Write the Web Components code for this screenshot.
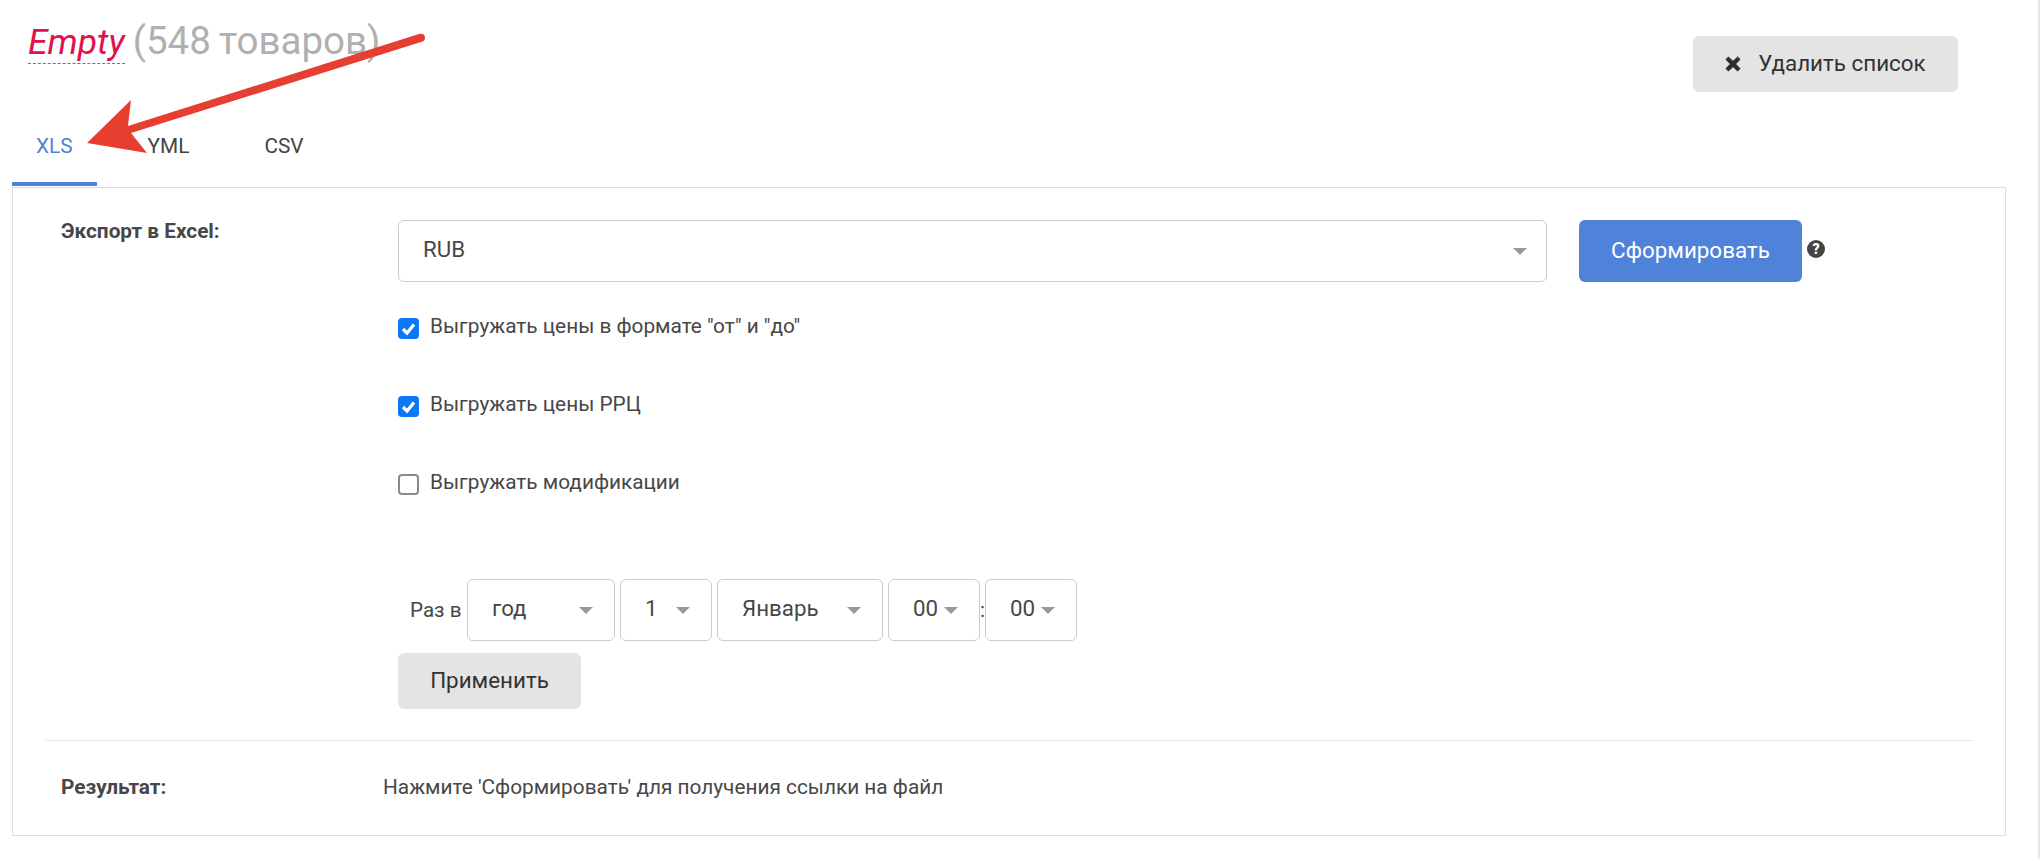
<!DOCTYPE html>
<html lang="ru"><head><meta charset="utf-8"><title>Экспорт</title>
<style>
html,body{margin:0;background:#fff;height:859px;overflow:hidden}
body{font:20px/1.4 Roboto,"Liberation Sans",sans-serif;color:#474747}
</style></head><body>
<export-page>
  <page-header slot="header" count="(548 товаров)" name="Empty"></page-header>
  <tab-bar slot="tabs">
    <tab-item active>XLS</tab-item><tab-item>YML</tab-item><tab-item>CSV</tab-item>
  </tab-bar>
  <export-panel slot="panel"></export-panel>
  <arrow-mark slot="overlay"></arrow-mark>
</export-page>
<script>
const def=(name,html)=>customElements.define(name,class extends HTMLElement{
  connectedCallback(){ if(this.shadowRoot) return; const s=this.attachShadow({mode:'open'}); s.innerHTML=typeof html==='function'?html(this):html; }
});
def('export-page',`<style>:host{display:block;position:relative;width:2040px;height:859px;overflow:hidden}
.edge{position:absolute;top:0;bottom:0;right:0;width:2px;background:#e8e8e8}</style>
<slot name="header"></slot><slot name="tabs"></slot><slot name="panel"></slot><slot name="overlay"></slot><div class="edge"></div>`);
def('page-header',h=>`<style>:host{display:flex;justify-content:space-between;align-items:flex-start;height:120px;padding:0 82px 0 28px;box-sizing:border-box}
.t{font-size:38.5px;line-height:42px;padding-top:20px;color:#b0b0b0;white-space:nowrap;word-spacing:-1.5px}
.n{font-size:35.5px;font-style:italic;color:#e0114d;border-bottom:1px dashed #1d8fd0;display:inline-block;line-height:42px}
app-button{margin-top:36px}</style>
<div class="t"><span class="n">${h.getAttribute('name')}</span> ${h.getAttribute('count')}</div>
<app-button w="265" icon>Удалить список</app-button>`);
def('tab-bar',`<style>:host{display:flex;height:67px;box-sizing:border-box;padding-left:12px}</style><slot></slot>`);
def('tab-item',h=>`<style>:host{display:block;box-sizing:border-box;height:66px;padding:14px 24px 0;margin-right:27px;font-size:20.8px;line-height:24px;color:${h.hasAttribute('active')?'#4f83d9':'#444'};${h.hasAttribute('active')?'border-bottom:4px solid #4f83d9;':''}}</style><slot></slot>`);
def('app-button',h=>{const c=h.getAttribute('kind')==='primary';return `<style>:host{display:inline-flex;align-items:center;justify-content:center;box-sizing:border-box;width:${h.getAttribute('w')}px;height:${h.getAttribute('hh')||56}px;border-radius:6px;background:${c?'#4f83d9':'#e4e4e4'};color:${c?'#fff':'#333'};font-size:22.4px;white-space:nowrap;flex:none}
svg{width:16px;height:16px;margin-right:17px}</style>
${h.hasAttribute('icon')?'<svg viewBox="0 0 16 16"><path d="M3.4 1 8 5.4 12.6 1 15 3.4 10.6 8 15 12.6 12.6 15 8 10.6 3.4 15 1 12.6 5.4 8 1 3.4Z" fill="#2b2b2b" stroke="#2b2b2b" stroke-linejoin="round"/></svg>':''}<slot></slot>`});
def('select-box',h=>`<style>:host{display:flex;align-items:center;box-sizing:border-box;width:${h.getAttribute('w')}px;height:62px;flex:none;border:1px solid #ccc;border-radius:6px;background:#fff;padding-left:${h.getAttribute('pl')||24}px;padding-right:${h.getAttribute('pr')||21}px;font-size:22.3px;color:#474747}
span{flex:1;margin-top:-2px}i{width:0;height:0;border:7px solid transparent;border-top:7px solid #999;border-bottom:0;display:block}</style><span><slot></slot></span><i></i>`);
def('check-row',h=>`<style>:host{display:flex;align-items:center;height:21px;gap:11px;font-size:20.8px;color:#474747;white-space:nowrap}
.b{width:21px;height:21px;box-sizing:border-box;border-radius:4px;flex:none;${h.hasAttribute('checked')?'background:#0b78f5':'border:2px solid #8a8a8a;background:#fff'}}svg{display:block}
.t{margin-top:-3px}</style>
<div class="b">${h.hasAttribute('checked')?'<svg viewBox="0 0 21 21" width="21" height="21"><path d="M5 11 9 15 16 6.5" fill="none" stroke="#fff" stroke-width="3.2"/></svg>':''}</div><span class="t"><slot></slot></span>`);
def('export-panel',`<style>:host{display:block;box-sizing:border-box;margin-left:12px;width:1994px;height:649px;border:1px solid #ddd;padding-top:32px}
.form{display:grid;grid-template-columns:337px 1fr;padding-left:48px}
.label{font-weight:700;font-size:20.8px;line-height:24px;margin-top:-1px}
.main{display:flex;align-items:flex-start}
.help{margin-left:5px;margin-top:20px;width:18px;height:18px;flex:none;display:block}
.checks{display:flex;flex-direction:column;gap:57px;margin-top:36px}
.sched{display:flex;align-items:center;margin-top:84px;gap:5px;font-size:20.6px}
.sched .pre{padding-left:12px;width:69px;box-sizing:border-box;margin-right:-5px;white-space:nowrap}
.sched .col{width:5px;margin:0 -5px 0 -5px;text-align:center}
.apply{margin-top:12px}
hr{border:0;border-top:1px solid #e6e6e6;margin:31px 32px 0 32px}
.res{display:grid;grid-template-columns:322px 1fr;padding:33px 0 0 48px;font-size:20.8px;line-height:26px}
b{font-weight:700}</style>
<div class="form"><div class="label">Экспорт в Excel:</div><div>
<div class="main"><select-box w="1149" pr="19">RUB</select-box><app-button kind="primary" w="223" hh="62" style="margin-left:32px">Сформировать</app-button>
<svg class="help" viewBox="0 0 18 18"><circle cx="9" cy="9" r="9" fill="#444"/><text x="9" y="14" text-anchor="middle" font-family="Roboto" font-weight="900" font-size="14" fill="#fff">?</text></svg></div>
<div class="checks"><check-row checked>Выгружать цены в формате "от" и "до"</check-row><check-row checked>Выгружать цены РРЦ</check-row><check-row>Выгружать модификации</check-row></div>
<div class="sched"><span class="pre">Раз в</span><select-box w="148">год</select-box><select-box w="92">1</select-box><select-box w="166">Январь</select-box><select-box w="92">00</select-box><span class="col">:</span><select-box w="92">00</select-box></div>
<div class="apply"><app-button w="183">Применить</app-button></div>
</div></div>
<hr><div class="res"><b>Результат:</b><span>Нажмите 'Сформировать' для получения ссылки на файл</span></div>`);
def('arrow-mark',`<style>:host{position:absolute;left:0;top:0;width:500px;height:200px;display:block;pointer-events:none}svg{display:block}</style>
<svg width="500" height="200" viewBox="0 0 500 200"><path d="M419 34Q425 33 425 38 425 41 421 42L131 133 147 153 87 143 131 100 128 126Z" fill="#e63f32"/></svg>`);
</script></body></html>
